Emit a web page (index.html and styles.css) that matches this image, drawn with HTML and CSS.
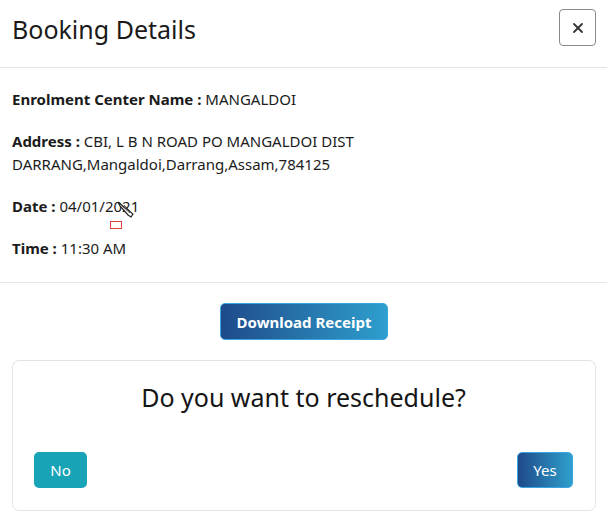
FILE: index.html
```html
<!DOCTYPE html>
<html lang="en">
<head>
<meta charset="utf-8">
<title>Booking Details</title>
<link rel="stylesheet" href="styles.css">
</head>
<body>
<div class="modal">
  <header class="modal-header">
    <h1 class="modal-title">Booking Details</h1>
    <button class="close-btn" aria-label="Close">
      <svg width="12" height="12" viewBox="0 0 12 12"><path d="M2 2 L10 10 M10 2 L2 10" stroke="#333" stroke-width="1.8" stroke-linecap="round"/></svg>
    </button>
  </header>
  <section class="modal-body">
    <p><b>Enrolment Center Name :</b> MANGALDOI</p>
    <p><b>Address :</b> CBI, L B N ROAD PO MANGALDOI DIST<br>DARRANG,Mangaldoi,Darrang,Assam,784125</p>
    <p class="date-row"><b>Date :</b> 04/01/2021
      <span class="marker"></span>
      <svg class="cursor" width="22" height="22" viewBox="0 0 22 22"><path d="M2 2 L17 14 L15 17 L12 15 L4 6 Z" fill="#fff" stroke="#222" stroke-width="1.2"/><path d="M6 6 L14 13 M8 5 L15 12" stroke="#444" stroke-width="0.8"/></svg>
    </p>
    <p><b>Time :</b> 11:30 AM</p>
  </section>
  <footer class="modal-footer">
    <button class="btn btn-grad btn-download">Download Receipt</button>
    <div class="card">
      <h2 class="card-title">Do you want to reschedule?</h2>
      <div class="card-actions">
        <button class="btn btn-teal">No</button>
        <button class="btn btn-grad btn-yes">Yes</button>
      </div>
    </div>
  </footer>
</div>
</body>
</html>
```

FILE: styles.css
```css
* { box-sizing: border-box; }
html, body { margin: 0; padding: 0; background: #fff; }
body {
  font-family: "Noto Sans", "Open Sans", "DejaVu Sans", sans-serif;
  color: #1b1b1b;
  width: 607px;
  height: 517px;
  overflow: hidden;
}
.modal { display: flex; flex-direction: column; }
.modal-header {
  height: 68px;
  display: flex;
  align-items: flex-start;
  justify-content: space-between;
  padding: 9px 11px 0 12px;
  border-bottom: 1px solid #e3e3e3;
}
.modal-title {
  margin: 3px 0 0;
  font-size: 25px;
  font-weight: 400;
  line-height: 34px;
  color: #1a1a1a;
}
.close-btn {
  width: 37px;
  height: 37px;
  border: 1px solid #8a8a8a;
  border-radius: 4px;
  background: #fff;
  display: flex;
  align-items: center;
  justify-content: center;
  padding: 0;
}
.modal-body {
  padding: 20px 12px 3px;
  border-bottom: 1px solid #e6e6e6;
  font-size: 15px;
}
.modal-body p {
  margin: 0 0 19px;
  line-height: 23px;
}
.modal-body b { font-weight: 700; }
.date-row { position: relative; }
.marker {
  position: absolute;
  left: 98px;
  top: 26px;
  width: 12px;
  height: 8px;
  border: 1px solid #d9443e;
}
.cursor {
  position: absolute;
  left: 104px;
  top: 5px;
}
.modal-footer {
  padding: 20px 11px 6px 12px;
  display: flex;
  flex-direction: column;
  align-items: center;
  gap: 20px;
}
.btn {
  font-family: inherit;
  border: 0;
  border-radius: 5px;
  color: #fff;
  font-size: 15px;
  cursor: pointer;
}
.btn-grad {
  background: linear-gradient(90deg, #1f4a8a 0%, #2e9fcd 100%);
  border: 1px solid #3aa6e0;
}
.btn-download {
  width: 168px;
  height: 37px;
  font-weight: 700;
  padding: 0;
}
.card {
  align-self: stretch;
  height: 151px;
  border: 1px solid #e2e2e2;
  border-radius: 7px;
  padding: 19px 22px 22px 21px;
  display: flex;
  flex-direction: column;
  justify-content: space-between;
}
.card-title {
  margin: 0;
  text-align: center;
  font-size: 25px;
  font-weight: 400;
  line-height: 34px;
  color: #151515;
}
.card-actions {
  display: flex;
  justify-content: space-between;
  align-items: center;
}
.btn-teal {
  background: #18a3b6;
  width: 53px;
  height: 36px;
  padding: 0;
}
.btn-yes {
  width: 56px;
  height: 36px;
  padding: 0;
}
```
